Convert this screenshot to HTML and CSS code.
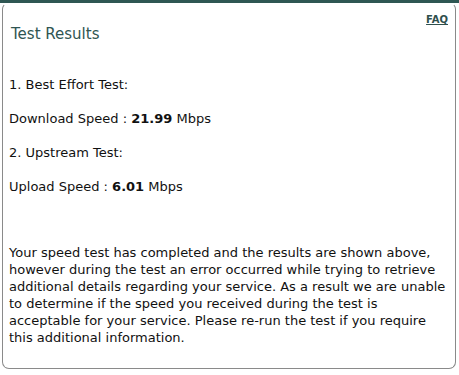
FILE: index.html
```html
<!DOCTYPE html>
<html>
<head>
<meta charset="utf-8">
<link rel="stylesheet" href="styles.css">
</head>
<body>
<div class="topbar"></div>
<div class="panel">
  <div class="faq-row"><a class="faq" href="#">FAQ</a></div>
  <h1 class="title">Test Results</h1>
  <p class="line first">1. Best Effort Test:</p>
  <p class="line">Download Speed : <b>21.99</b> Mbps</p>
  <p class="line">2. Upstream Test:</p>
  <p class="line">Upload Speed : <b>6.01</b> Mbps</p>
  <p class="note">Your speed test has completed and the results are shown above, however during the test an error occurred while trying to retrieve additional details regarding your service. As a result we are unable to determine if the speed you received during the test is acceptable for your service. Please re-run the test if you require this additional information.</p>
</div>
</body>
</html>
```
FILE: styles.css
```css
html, body {
  margin: 0;
  padding: 0;
  background: #ffffff;
}
body {
  width: 459px;
  height: 375px;
  overflow: hidden;
  font-family: "DejaVu Sans", Verdana, sans-serif;
  color: #111111;
}
.topbar {
  height: 3px;
  background: #2f5753;
}
.panel {
  margin: 0 3px 0 2px;
  height: 366px;
  box-sizing: border-box;
  border: 1px solid #8a8a8a;
  border-top-color: transparent;
  border-radius: 6px 6px 7px 7px;
  padding: 0 7px 0 6px;
}
.faq-row {
  display: flex;
  justify-content: flex-end;
  padding-top: 9px;
  height: 13px;
}
.faq {
  font-size: 10px;
  font-weight: bold;
  color: #2f4f4d;
  text-decoration: underline;
  line-height: 13px;
}
.title {
  margin: -2px 0 0 2px;
  font-size: 15px;
  font-weight: normal;
  color: #2f5552;
  line-height: 20px;
}
.line {
  margin: 17px 0 0 0;
  font-size: 13px;
  line-height: 17px;
}
.line.first {
  margin-top: 32px;
}
.line b {
  font-weight: bold;
}
.note {
  margin: 49px 0 0 0;
  font-size: 13px;
  line-height: 17px;
}
```
